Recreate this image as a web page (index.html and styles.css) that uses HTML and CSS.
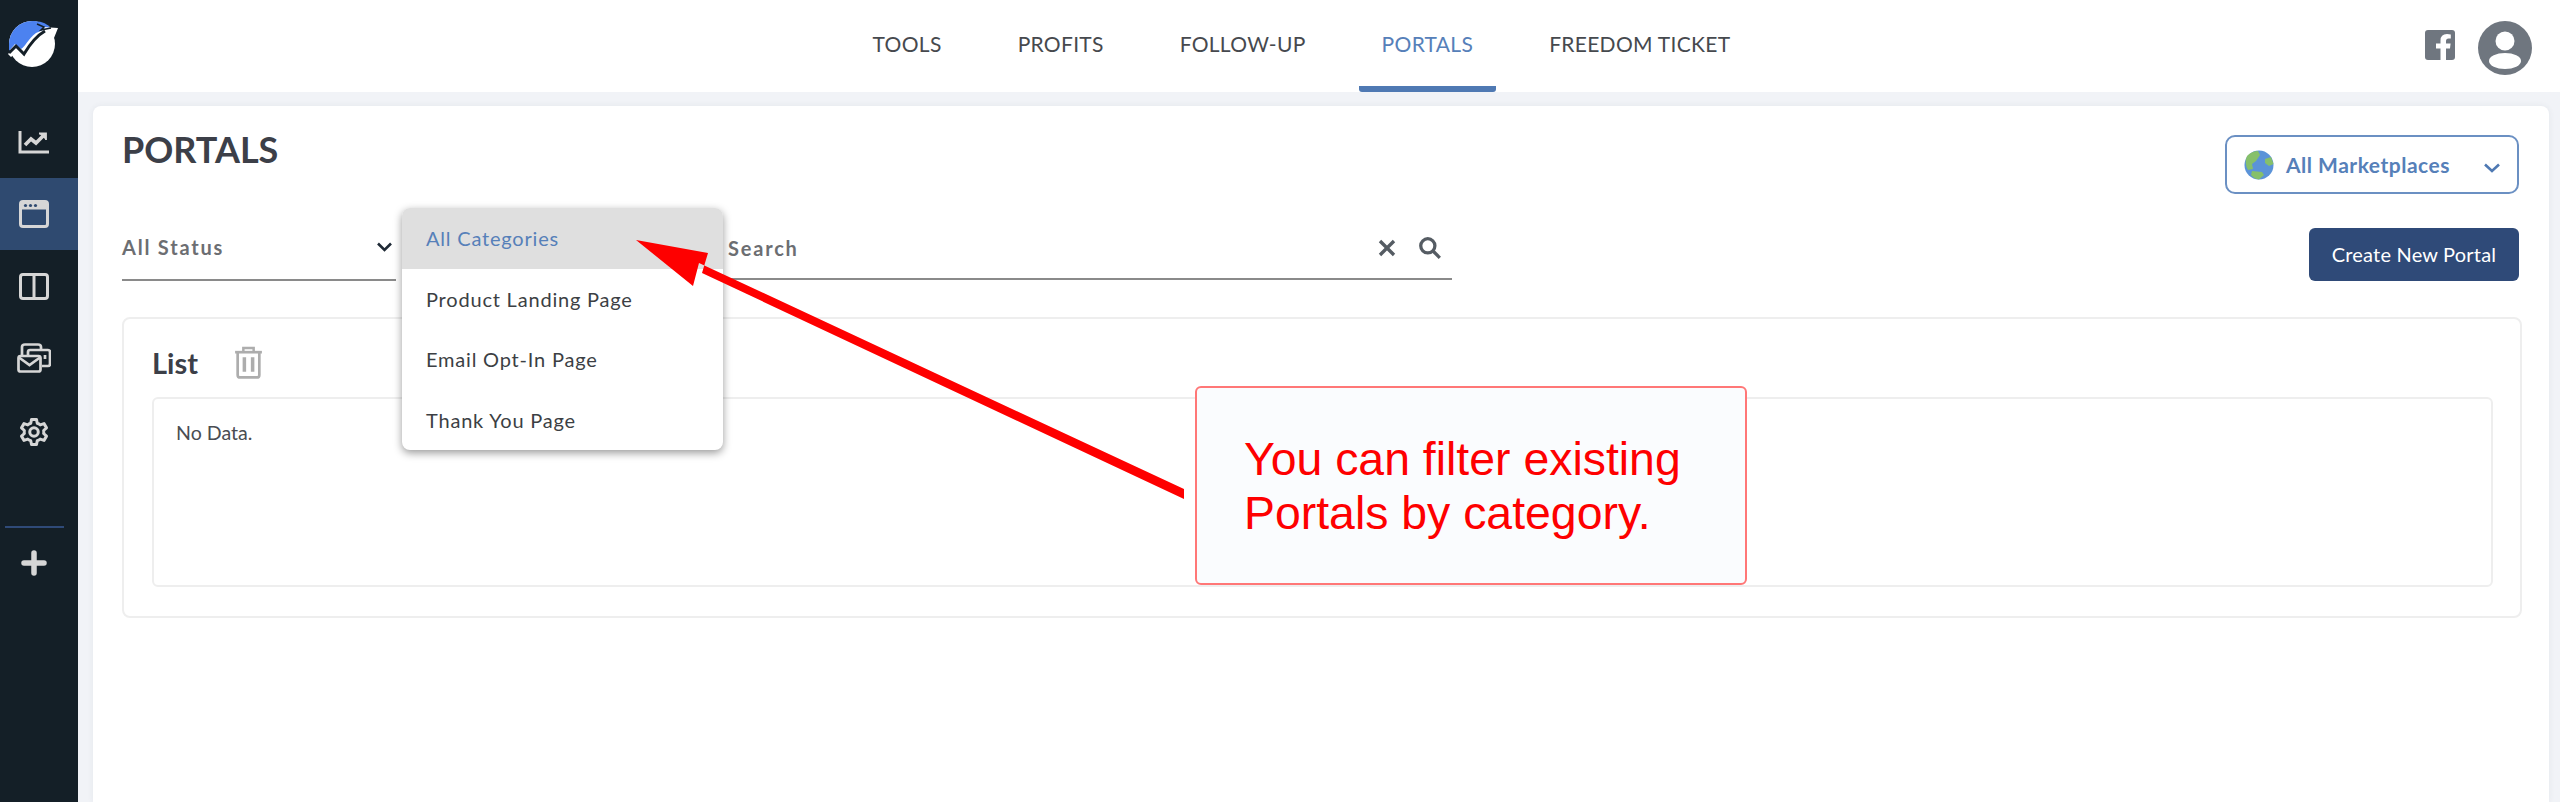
FILE: index.html
```html
<!DOCTYPE html>
<html>
<head>
	<meta charset="utf-8">
	<title>Portals</title>
	<link rel="stylesheet" href="styles.css">
</head>
<body>
<div class="app">

	<aside class="sidebar">
		<div class="logo">
			<svg width="52" height="48" viewBox="0 0 52 48">
				<circle cx="24" cy="24" r="23" fill="#fff"/>
				<path d="M1 24A23 23 0 0 1 24 1C32 1 38 3 42 7L28 13C20 19 17 27 13 29L7 24L1 31Z" fill="#4c82f0"/>
				<path d="M0 34L8 26L16 33C22 23 28 15 38 10L35 7L50 8L44 23L41 15C31 21 24 31 17 41L8 33L3 37Z" fill="#fff"/>
				<path d="M1 33L8 26L16 34C22 24 28 16 37 11" fill="none" stroke="#141f27" stroke-width="3"/>
				<path d="M29 4L36 7L33 10L43 8" fill="none" stroke="#141f27" stroke-width="1.5"/>
			</svg>
		</div>
		<a class="side-item side-chart">
			<svg width="32" height="24" viewBox="0 0 32 24" fill="none" stroke="#d6d6d6" stroke-width="3">
				<path d="M2 1V22H31"/>
				<path d="M7 15L13 9L18 13L26 5" stroke-width="3.6"/>
				<path d="M21 3.5H28V10" fill="#d6d6d6" stroke-width="1.8"/>
			</svg>
		</a>
		<a class="side-item active">
			<svg width="30" height="28" viewBox="0 0 30 28">
				<rect x="1.5" y="1.5" width="27" height="25" rx="2.5" fill="none" stroke="#d6d6d6" stroke-width="3"/>
				<rect x="1.5" y="1.5" width="27" height="8" fill="#d6d6d6"/>
				<circle cx="6.5" cy="5.5" r="1.6" fill="#2f4a70"/>
				<circle cx="11.5" cy="5.5" r="1.6" fill="#2f4a70"/>
				<circle cx="16.5" cy="5.5" r="1.6" fill="#2f4a70"/>
			</svg>
		</a>
		<a class="side-item">
			<svg width="30" height="27" viewBox="0 0 30 27" fill="none" stroke="#d6d6d6">
				<rect x="1.5" y="1.5" width="27" height="24" rx="2.5" stroke-width="3"/>
				<path d="M15 1V26" stroke-width="3"/>
			</svg>
		</a>
		<a class="side-item">
			<svg width="34" height="30" viewBox="0 0 34 30" fill="none" stroke="#d6d6d6" stroke-width="2.7">
				<path d="M5 12V4Q5 1.5 8 1.5H21Q24 1.5 24 4V6"/>
				<path d="M11 12V9Q11 7 13 7H31Q33 7 33 9V21Q33 23 31 23H25"/>
				<rect x="1.5" y="13" width="22" height="15.5" rx="2"/>
				<path d="M2 14.5L12.5 22L23 14.5"/>
				<path d="M28 12V16"/>
			</svg>
		</a>
		<a class="side-item side-gear">
			<svg width="30" height="30" viewBox="0 0 24 24" fill="none" stroke="#d6d6d6" stroke-width="2.4" stroke-linejoin="round">
				<path d="M10 2H14L14.6 5Q16 5.5 17 6.3L20 5.3L22 8.7L19.7 10.8Q20 12 19.7 13.2L22 15.3L20 18.7L17 17.7Q16 18.5 14.6 19L14 22H10L9.4 19Q8 18.5 7 17.7L4 18.7L2 15.3L4.3 13.2Q4 12 4.3 10.8L2 8.7L4 5.3L7 6.3Q8 5.5 9.4 5Z"/>
				<circle cx="12" cy="12" r="3.4"/>
			</svg>
		</a>
		<div class="side-divider"></div>
		<a class="side-plus">
			<svg width="26" height="26" viewBox="0 0 26 26" fill="none" stroke="#d6d6d6" stroke-width="5.5" stroke-linecap="round">
				<path d="M13 3V23M3 13H23"/>
			</svg>
		</a>
	</aside>

	<div class="main">
		<header class="topbar">
			<nav class="nav">
				<a class="nav-link">Tools</a>
				<a class="nav-link">Profits</a>
				<a class="nav-link">Follow-Up</a>
				<a class="nav-link current">Portals</a>
				<a class="nav-link">Freedom Ticket</a>
			</nav>
			<div class="top-icons">
				<svg width="30" height="30" viewBox="0 0 30 30">
					<rect width="30" height="30" rx="3" fill="#6f767f"/>
					<path d="M21 30V18.5H25L25.6 13.5H21V11Q21 8.5 23.5 8.5H25.8V4.4Q24 4 22 4Q15.5 4 15.5 10.5V13.5H11V18.5H15.5V30Z" fill="#fff"/>
				</svg>
				<svg width="54" height="54" viewBox="0 0 54 54">
					<circle cx="27" cy="27" r="27" fill="#6f767f"/>
					<circle cx="27" cy="20" r="9.5" fill="#fff"/>
					<ellipse cx="27" cy="40" rx="16" ry="8" fill="#fff"/>
				</svg>
			</div>
		</header>

		<section class="card">
			<div class="card-head">
				<h1 class="page-title">PORTALS</h1>
				<div class="market-select">
					<svg width="30" height="30" viewBox="0 0 30 30">
						<circle cx="15" cy="15" r="14.5" fill="#5b93d8"/>
						<path d="M3 6Q8 1 14 1L16 5L12 11L8 14L9 19L4 20Q0 13 3 6Z" fill="#86c06a"/>
						<path d="M21 9L27 7L29.5 14L25 16L21 13Z" fill="#86c06a"/>
						<path d="M8 21L18 22L20 25L15 29.5Q10 29 7 25Z" fill="#86c06a"/>
					</svg>
					<span class="market-label">All Marketplaces</span>
					<svg class="market-chevron" width="16" height="10" viewBox="0 0 16 10" fill="none" stroke="#4f79b3" stroke-width="2.6">
						<path d="M1 1.5L8 8L15 1.5"/>
					</svg>
				</div>
			</div>

			<div class="filters">
				<div class="filter-status">
					<span class="filter-text">All Status</span>
					<svg width="15" height="10" viewBox="0 0 15 10" fill="none" stroke="#1f2a36" stroke-width="2.6">
						<path d="M1 1.5L7.5 8L14 1.5"/>
					</svg>
				</div>
				<div class="filter-category">
					<ul class="menu">
						<li class="menu-item selected">All Categories</li>
						<li class="menu-item">Product Landing Page</li>
						<li class="menu-item">Email Opt-In Page</li>
						<li class="menu-item">Thank You Page</li>
					</ul>
				</div>
				<div class="filter-search">
					<span class="filter-text">Search</span>
					<svg class="clear-icon" width="20" height="20" viewBox="0 0 20 20" fill="none" stroke="#555c63" stroke-width="3.4">
						<path d="M3 3L17 17M17 3L3 17"/>
					</svg>
					<svg width="24" height="24" viewBox="0 0 22 22" fill="none" stroke="#555c63" stroke-width="3">
						<circle cx="9" cy="9" r="6.5"/>
						<path d="M14 14L20 20"/>
					</svg>
				</div>
				<button class="create-btn">Create New Portal</button>
			</div>

			<div class="list-panel">
				<div class="list-head">
					<h2 class="list-title">List</h2>
					<svg width="29" height="33" viewBox="0 0 28 32" fill="none" stroke="#adadad" stroke-width="2.6">
						<path d="M1 6H27"/>
						<path d="M9 6V2H19V6" stroke-width="2.4"/>
						<path d="M3.5 6V28Q3.5 30.5 6 30.5H22Q24.5 30.5 24.5 28V6"/>
						<path d="M10 11V25M18 11V25" stroke-width="3.4"/>
					</svg>
				</div>
				<div class="list-body">No Data.</div>
			</div>
		</section>
	</div>
</div>

<!-- annotation drawn over the page -->
<svg class="arrow" width="2560" height="802" viewBox="0 0 2560 802">
	<path d="M1184 489L699 263L693 286L636 240L708 253L702 273L1184 499Z" fill="#fe0000"/>
</svg>
<div class="callout">You can filter existing<br>Portals by category.</div>

</body>
</html>
```

FILE: styles.css
```css
html, body {
	margin: 0;
	height: 100%;
	overflow: hidden;
}

body {
	font-family: Lato, "Open Sans", sans-serif;
	color: #3c3f44;
	background: #fff;
}

.app {
	display: flex;
	height: 802px;
}

/* left rail */
.sidebar {
	width: 78px;
	flex: none;
	background: #141f27;
	display: flex;
	flex-direction: column;
}

.logo {
	height: 130px;
	padding: 20px 0 0 8px;
	box-sizing: border-box;
}

.side-item {
	height: 72px;
	display: flex;
	align-items: center;
	justify-content: center;
	padding-right: 10px;
}

.side-chart {
	height: 48px;
	align-items: flex-start;
}

.side-gear {
	padding-top: 2px;
}

.side-item.active {
	background: #2f4a70;
}

.side-divider {
	height: 2px;
	margin: 58px 14px 0 5px;
	background: #2f4a78;
}

.side-plus {
	display: flex;
	justify-content: center;
	padding: 22px 10px 0 0;
}

/* top bar */
.main {
	flex: 1;
	display: flex;
	flex-direction: column;
	background: #f1f3f7;
	min-width: 0;
}

.topbar {
	height: 92px;
	flex: none;
	background: #fff;
	display: flex;
	justify-content: center;
	position: relative;
}

.nav {
	display: flex;
	gap: 30px;
	margin-right: 35px;
}

.nav-link {
	padding: 0 23px;
	display: flex;
	align-items: center;
	height: 86px;
	border-bottom: 6px solid transparent;
	border-radius: 0 0 3px 3px;
	font-size: 21px;
	letter-spacing: 0.3px;
	text-transform: uppercase;
	color: #46494e;
}

.nav-link.current {
	color: #5680b9;
	border-bottom-color: #4f79b3;
}

.top-icons {
	position: absolute;
	right: 28px;
	top: 21px;
	display: flex;
	align-items: flex-start;
	gap: 23px;
}

.top-icons svg:first-child {
	margin-top: 9px;
}

/* page card */
.card {
	flex: 1;
	margin: 14px 11px 0 15px;
	padding: 29px 27px 0 29px;
	background: #fff;
	border-radius: 8px 8px 0 0;
	box-shadow: 0 0 6px rgba(60, 70, 90, 0.07);
}

.card-head {
	display: flex;
	justify-content: space-between;
	align-items: flex-start;
	padding-right: 3px;
}

.page-title {
	margin: -6px 0 0;
	font-size: 36px;
	line-height: 40px;
	font-weight: 700;
	color: #3c3f48;
}

.market-select {
	width: 294px;
	height: 59px;
	box-sizing: border-box;
	border: 2px solid #6b90c3;
	border-radius: 10px;
	padding: 0 17px;
	display: flex;
	align-items: center;
	gap: 12px;
}

.market-label {
	font-size: 21px;
	font-weight: 700;
	letter-spacing: 0.5px;
	color: #5680b9;
}

.market-chevron {
	margin: 6px 0 0 auto;
}

/* filters */
.filters {
	display: flex;
	align-items: flex-start;
	margin-top: 34px;
	padding-right: 3px;
}

.filter-status {
	width: 274px;
	height: 53px;
	box-sizing: border-box;
	border-bottom: 2px solid #8a8a8a;
	display: flex;
	justify-content: space-between;
	align-items: center;
	padding: 0 4px 14px 0;
}

.filter-text {
	font-size: 20px;
	font-weight: 700;
	letter-spacing: 1.8px;
	color: #6c6e72;
}

.filter-category {
	width: 303px;
	margin-left: 6px;
	position: relative;
}

.menu {
	position: absolute;
	left: 0;
	top: -20px;
	width: 321px;
	margin: 0;
	padding: 0;
	list-style: none;
	background: #fff;
	border-radius: 8px;
	overflow: hidden;
	box-shadow: 0 3px 8px rgba(0, 0, 0, 0.4);
	z-index: 2;
}

.menu-item {
	height: 60.5px;
	padding-left: 24px;
	display: flex;
	align-items: center;
	font-size: 20px;
	letter-spacing: 0.8px;
	color: #3c3f44;
}

.menu-item.selected {
	background: #dfdfdf;
	color: #5680b9;
}

.filter-search {
	width: 747px;
	height: 52px;
	box-sizing: border-box;
	border-bottom: 2px solid #8a8a8a;
	display: flex;
	align-items: center;
	gap: 21px;
	padding: 0 10px 10px 23px;
}

.clear-icon {
	margin-left: auto;
}

.create-btn {
	margin-left: auto;
	width: 210px;
	height: 53px;
	padding-bottom: 3px;
	border: 0;
	border-radius: 6px;
	background: #2f4a78;
	color: #fff;
	font-family: inherit;
	font-size: 20px;
	letter-spacing: 0.2px;
}

/* list */
.list-panel {
	margin-top: 36px;
	height: 301px;
	box-sizing: border-box;
	border: 2px solid #eeeeee;
	border-radius: 8px;
	padding: 0 27px 0 28px;
}

.list-head {
	height: 78px;
	box-sizing: border-box;
	padding-top: 8px;
	display: flex;
	align-items: center;
	gap: 36px;
}

.list-title {
	margin: 0;
	font-size: 29px;
	font-weight: 700;
	color: #3c3f48;
}

.list-body {
	height: 190px;
	box-sizing: border-box;
	border: 2px solid #eeeeee;
	border-radius: 6px;
	padding: 22px 22px;
	font-size: 19.6px;
	line-height: 24px;
	color: #4a4d52;
}

/* annotation */
.arrow {
	position: absolute;
	left: 0;
	top: 0;
	z-index: 3;
	pointer-events: none;
}

.callout {
	position: absolute;
	left: 1195px;
	top: 386px;
	width: 552px;
	height: 199px;
	box-sizing: border-box;
	padding: 44px 0 0 47px;
	background: #fafcfe;
	border: 2px solid #f77;
	border-radius: 6px;
	font-family: "Liberation Sans", Arial, sans-serif;
	font-size: 46.4px;
	line-height: 54px;
	white-space: nowrap;
	color: #fe0000;
	z-index: 4;
}
```
